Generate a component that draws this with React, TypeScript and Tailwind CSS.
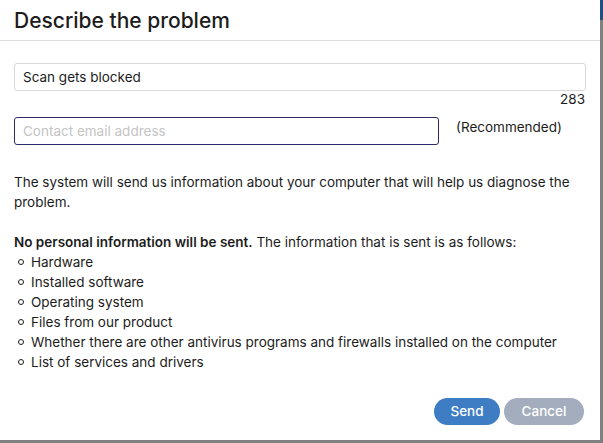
import React from "react"

const items = [
  "Hardware",
  "Installed software",
  "Operating system",
  "Files from our product",
  "Whether there are other antivirus programs and firewalls installed on the computer",
  "List of services and drivers",
]

const App = () => {
  return (
    <div
      className="flex h-[443px] w-[603px] bg-[#808080]"
      style={{ fontFamily: "Inter, 'Noto Sans', sans-serif" }}
    >
      <div className="flex h-[440px] w-[600px] flex-col bg-white text-[#1c1c1c]">
        <div className="border-b border-[#dcdcdc] px-[14px] pt-[10px] pb-[8px]">
          <h1 className="text-[21px] leading-[22px] font-medium">Describe the problem</h1>
        </div>

        <div className="flex flex-col px-[14px] pt-[22px]">
          <input
            className="h-[28px] w-[572px] rounded-[3px] border border-[#d9d9d9] px-[8px] text-[13.5px] outline-none"
            defaultValue="Scan gets blocked"
          />
          <div className="mr-[1px] self-end text-[13.5px] leading-[17px]">283</div>

          <div className="mt-[9px] flex items-start">
            <input
              className="h-[28px] w-[425px] rounded-[3px] border border-[#2c2c6c] px-[8px] text-[13.5px] outline-none placeholder:text-[#c4c4c4]"
              placeholder="Contact email address"
            />
            <span className="ml-[17px] mt-[1px] text-[13.5px] leading-[18px]">(Recommended)</span>
          </div>

          <p className="mt-[27px] text-[13.5px] leading-[20px]">
            The system will send us information about your computer that will help us diagnose the problem.
          </p>

          <p className="mt-[20px] text-[13.5px] leading-[20px]">
            <b className="font-semibold">No personal information will be sent.</b> The information that is sent
            is as follows:
          </p>
          <ul className="text-[13.5px] leading-[20px]">
            {items.map((item) => (
              <li key={item} className="flex items-center">
                <span className="mx-[4px] h-[6px] w-[6px] rounded-full border border-[#1c1c1c]" />
                <span className="ml-[3px]">{item}</span>
              </li>
            ))}
          </ul>
        </div>

        <div className="mt-auto mr-[16px] mb-[15px] flex justify-end gap-[4px]">
          <button className="h-[27px] w-[66px] rounded-full bg-[#3e7cc4] text-[13.5px] font-medium text-white">
            Send
          </button>
          <button className="h-[27px] w-[80px] rounded-full bg-[#a3adbd] text-[13.5px] font-medium text-white">
            Cancel
          </button>
        </div>
      </div>
      <div className="flex flex-1 flex-col">
        <div className="h-[20px] bg-[#1f4f80]" />
      </div>
    </div>
  )
}

export default App
